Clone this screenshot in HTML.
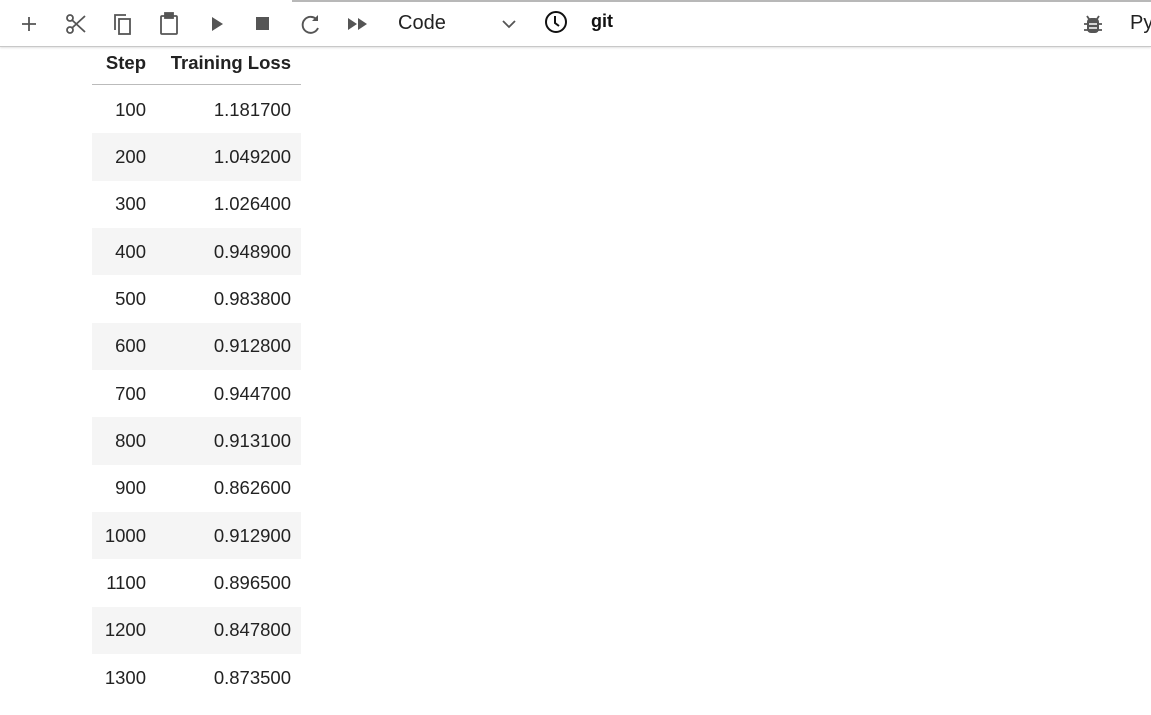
<!DOCTYPE html><html><head><style>
body{margin:0;width:1151px;height:715px;background:#fff;overflow:hidden;font-family:"Liberation Sans",sans-serif;position:relative}
.topline{position:absolute;left:292px;top:0;width:859px;height:2px;background:#b8b8b8}
.tb{position:absolute;left:0;top:0;width:1151px;height:46px;border-bottom:1px solid #c8c8c8;box-shadow:0 1px 2px rgba(0,0,0,.12)}
.tb svg{position:absolute}
.t{position:absolute;font-family:"Liberation Sans",sans-serif;color:#222}
table{position:absolute;left:92px;top:46px;border-collapse:collapse;font-size:18.5px;color:#222;table-layout:fixed;width:209px}
th{font-weight:bold;text-align:right;height:38px;padding:0 10px 3px 0;border-bottom:1px solid #bbb;vertical-align:middle;box-sizing:border-box}
td{text-align:right;height:47.33px;padding:0 10px 0 0;box-sizing:border-box}
tr:nth-child(even) td{background:#f5f5f5}
tr.sp td{height:2px;background:#fff!important}
col.a{width:64px}col.b{width:145px}
</style></head><body>
<div class="topline"></div>
<div class="tb">
<svg style="left:20px;top:15px" width="18" height="18"><path d="M9 2v14M2 9h14" stroke="#555" stroke-width="1.8"/></svg>
<svg style="left:65px;top:13px" width="22" height="22" fill="none" stroke="#555" stroke-width="1.8"><circle cx="5" cy="17" r="3"/><circle cx="5" cy="5" r="3"/><path d="M7 7L20 19M7 15L20 3"/></svg>
<svg style="left:112px;top:12px" width="22" height="24" fill="none" stroke="#555" stroke-width="1.8"><path d="M3 18V3h11"/><rect x="7" y="7" width="11" height="15"/></svg>
<svg style="left:159px;top:12px" width="22" height="24" fill="none" stroke="#555" stroke-width="1.8"><rect x="2" y="4" width="16" height="18" rx="1"/><rect x="6" y="1" width="8" height="5" fill="#555"/></svg>
<svg style="left:210px;top:16px" width="14" height="16"><path d="M2 1l11 7-11 7z" fill="#555"/></svg>
<svg style="left:256px;top:17px" width="14" height="14"><rect width="13" height="13" fill="#555"/></svg>
<svg style="left:300px;top:13px" width="22" height="22" fill="none" stroke="#555" stroke-width="1.9"><path d="M17 7A8 8 0 1 0 18 15"/><path d="M18 2v6h-6z" fill="#555" stroke="none"/></svg>
<svg style="left:347px;top:17px" width="22" height="14"><path d="M1 1l9 6-9 6zM11 1l9 6-9 6z" fill="#555"/></svg>
<div class="t" style="left:398px;top:12px;font-size:20px;">Code</div>
<svg style="left:501px;top:18px" width="16" height="12"><path d="M2 3l6 6 6-6" fill="none" stroke="#555" stroke-width="1.8"/></svg>
<svg style="left:544px;top:10px" width="24" height="24" fill="none" stroke="#111" stroke-width="2"><circle cx="12" cy="12" r="10"/><path d="M11 6v7l4 3"/></svg>
<div class="t" style="left:591px;top:11px;font-size:18px;font-weight:bold;color:#111">git</div>
<svg style="left:1083px;top:14px" width="20" height="20"><path d="M6 5l-2-3M14 5l2-3M1 10h4M15 10h4M1 16h4M15 16h4" stroke="#555" stroke-width="1.8"/><rect x="4" y="4" width="12" height="15" rx="4" fill="#555"/><path d="M6 10h8M6 14h8" stroke="#fff" stroke-width="1.6"/></svg>
<div class="t" style="left:1130px;top:12px;font-size:20px;">Py</div>
</div>
<table>
<colgroup><col class="a"><col class="b"></colgroup>
<tr><th>Step</th><th>Training Loss</th></tr>
<tr class="sp"><td></td><td></td></tr>
<tr><td>100</td><td>1.181700</td></tr>
<tr><td>200</td><td>1.049200</td></tr>
<tr><td>300</td><td>1.026400</td></tr>
<tr><td>400</td><td>0.948900</td></tr>
<tr><td>500</td><td>0.983800</td></tr>
<tr><td>600</td><td>0.912800</td></tr>
<tr><td>700</td><td>0.944700</td></tr>
<tr><td>800</td><td>0.913100</td></tr>
<tr><td>900</td><td>0.862600</td></tr>
<tr><td>1000</td><td>0.912900</td></tr>
<tr><td>1100</td><td>0.896500</td></tr>
<tr><td>1200</td><td>0.847800</td></tr>
<tr><td>1300</td><td>0.873500</td></tr>
</table>
</body></html>
